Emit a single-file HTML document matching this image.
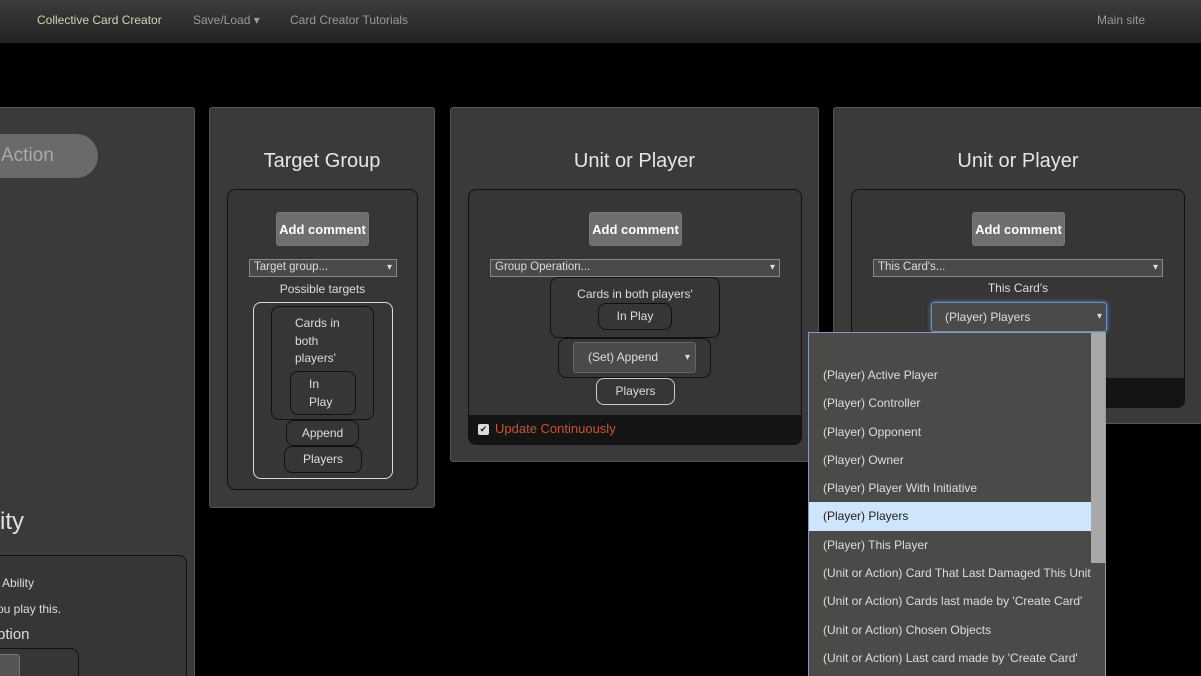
<!DOCTYPE html>
<html style="width:1201px;height:676px;overflow:hidden"><head><meta charset="utf-8"><style>
*{box-sizing:border-box;margin:0;padding:0}
body{width:1201px;height:676px;background:#000;overflow:hidden;position:relative;font-family:"Liberation Sans","DejaVu Sans",sans-serif;color:#ddd}
.a{position:absolute}
.nav{left:0;top:0;width:1201px;height:43px;background:linear-gradient(#3c3c3c,#222);font-size:12px}
.nav span{position:absolute;top:13px;color:#9a9a9a}
.panel{position:absolute;background:#3a3a3a;border:1px solid #555;border-radius:3px}
.inner{position:absolute;background:#363636;border:1px solid #111;border-radius:8px}
.title{position:absolute;width:100%;text-align:center;font-size:20px;color:#e6e6e6}
.btn{position:absolute;background:#6e6e6e;border-radius:3px;color:#fff;font-weight:bold;font-size:13px;text-align:center;line-height:33px;border:1px solid #777}
.sel{position:absolute;background:#4a4a4a;border:1px solid #888;font-size:11.5px;color:#ddd;line-height:15px;padding-left:4px}
.sel:after{content:"▾";position:absolute;right:4px;top:0;font-size:10px}
.box{position:absolute;border:1px solid #111;border-radius:8px;font-size:12px;color:#ddd;text-align:center}
.t{position:absolute;font-size:12px;color:#ddd;text-align:center}
.dd div{height:28.3px;line-height:28px;padding-left:14px;font-size:12px;color:#ddd;white-space:nowrap}
</style></head><body>
<div class="a nav">
<span style="left:37px;color:#d6cfb8">Collective Card Creator</span>
<span style="left:193px">Save/Load ▾</span>
<span style="left:290px">Card Creator Tutorials</span>
<span style="left:1097px">Main site</span>
</div>

<!-- panel 1 -->
<div class="panel" style="left:-5px;top:107px;width:200px;height:569px;border-bottom:none;border-radius:3px 3px 0 0">
<div class="a" style="left:-40px;top:26px;width:142px;height:44px;border-radius:22px;background:#6a6a6a;color:#aaa;font-size:19px;line-height:44px;padding-left:45px">Action</div>
<div class="a" style="left:4px;top:400px;font-size:24px;color:#e0e0e0">ity</div>
<div class="inner" style="left:-20px;top:447px;width:211px;height:140px">
<div class="a" style="left:25px;top:20px;font-size:12px">Ability</div>
<div class="a" style="left:20px;top:46px;font-size:12px">ou play this.</div>
<div class="a" style="left:20px;top:70px;font-size:15px">ption</div>
<div class="a" style="left:-10px;top:92px;width:112px;height:50px;border:1px solid #111;border-radius:8px"></div>
<div class="a" style="left:-5px;top:98px;width:48px;height:40px;background:#555;border:1px solid #777;border-radius:3px"></div>
</div>
</div>

<!-- panel 2 -->
<div class="panel" style="left:209px;top:107px;width:226px;height:401px">
<div class="title" style="top:42px">Target Group</div>
<div class="inner" style="left:17px;top:81px;width:191px;height:301px">
<div class="btn" style="left:48px;top:22px;width:93px;height:34px">Add comment</div>
<div class="sel" style="left:21px;top:69px;width:148px;height:18px">Target group...</div>
<div class="t" style="left:0;top:92px;width:189px">Possible targets</div>
<div class="box" style="left:25px;top:112px;width:140px;height:177px;border:1px solid #ddd"></div>
<div class="box" style="left:43px;top:116px;width:103px;height:114px;text-align:left;padding:8px 0 0 23px;line-height:17.5px">Cards in<br>both<br>players'</div>
<div class="box" style="left:62px;top:181px;width:66px;height:44px;text-align:left;padding:4px 0 0 18px;line-height:17.5px">In<br>Play</div>
<div class="box" style="left:58px;top:230px;width:73px;height:26px;line-height:24px">Append</div>
<div class="box" style="left:56px;top:256px;width:78px;height:27px;line-height:25px">Players</div>
</div>
</div>

<!-- panel 3 -->
<div class="panel" style="left:450px;top:107px;width:369px;height:355px">
<div class="title" style="top:42px">Unit or Player</div>
<div class="inner" style="left:17px;top:81px;width:334px;height:256px;overflow:hidden">
<div class="btn" style="left:120px;top:22px;width:93px;height:34px">Add comment</div>
<div class="sel" style="left:21px;top:69px;width:290px;height:18px">Group Operation...</div>
<div class="box" style="left:81px;top:87px;width:170px;height:61px;padding-top:9px">Cards in both players'</div>
<div class="box" style="left:129px;top:113px;width:74px;height:27px;line-height:25px">In Play</div>
<div class="box" style="left:89px;top:148px;width:153px;height:40px"></div>
<div class="a" style="left:104px;top:152px;width:123px;height:31px;background:#4a4a4a;border:1px solid #666;border-radius:3px;font-size:12px;line-height:29px;padding-left:14px">(Set) Append<span style="position:absolute;right:5px;font-size:10px">▾</span></div>
<div class="box" style="left:127px;top:188px;width:79px;height:27px;line-height:25px;border-color:#ccc">Players</div>
<div class="a" style="left:0;top:225px;width:334px;height:31px;background:#141414"></div>
<div class="a" style="left:9px;top:234px;width:11px;height:11px;background:#ddd;border-radius:2px;color:#222;font-size:9px;line-height:11px;text-align:center">✔</div>
<div class="a" style="left:26px;top:231px;font-size:13px;color:#c9532f">Update Continuously</div>
</div>
</div>

<!-- panel 4 -->
<div class="panel" style="left:833px;top:107px;width:370px;height:317px">
<div class="title" style="top:42px">Unit or Player</div>
<div class="inner" style="left:17px;top:81px;width:334px;height:219px;overflow:hidden">
<div class="btn" style="left:120px;top:22px;width:93px;height:34px">Add comment</div>
<div class="sel" style="left:21px;top:69px;width:290px;height:18px">This Card's...</div>
<div class="t" style="left:0;top:91px;width:332px">This Card's</div>
<div class="a" style="left:79px;top:112px;width:176px;height:30px;background:#4a4a4a;border:1px solid #6a8fc0;box-shadow:0 0 4px #5a8fd0;border-radius:3px;font-size:12px;line-height:28px;padding-left:13px">(Player) Players<span style="position:absolute;right:4px;font-size:10px">▾</span></div>
<div class="a" style="left:0;top:188px;width:334px;height:31px;background:#141414"></div>
</div>
</div>

<!-- dropdown list -->
<div class="a dd" style="left:808px;top:332px;width:298px;height:344px;background:#4a4a48;border:1px solid #8a9ab8;border-bottom:none;overflow:hidden">
<div class="a" style="right:0;top:0;width:8px;height:230px;background:#a8a8a8"></div>
<div style="height:28px"></div>
<div>(Player) Active Player</div>
<div>(Player) Controller</div>
<div>(Player) Opponent</div>
<div>(Player) Owner</div>
<div>(Player) Player With Initiative</div>
<div style="background:#cfe5fb;color:#222;margin-right:8px">(Player) Players</div>
<div>(Player) This Player</div>
<div>(Unit or Action) Card That Last Damaged This Unit</div>
<div>(Unit or Action) Cards last made by 'Create Card'</div>
<div>(Unit or Action) Chosen Objects</div>
<div>(Unit or Action) Last card made by 'Create Card'</div>
</div>
</body></html>
